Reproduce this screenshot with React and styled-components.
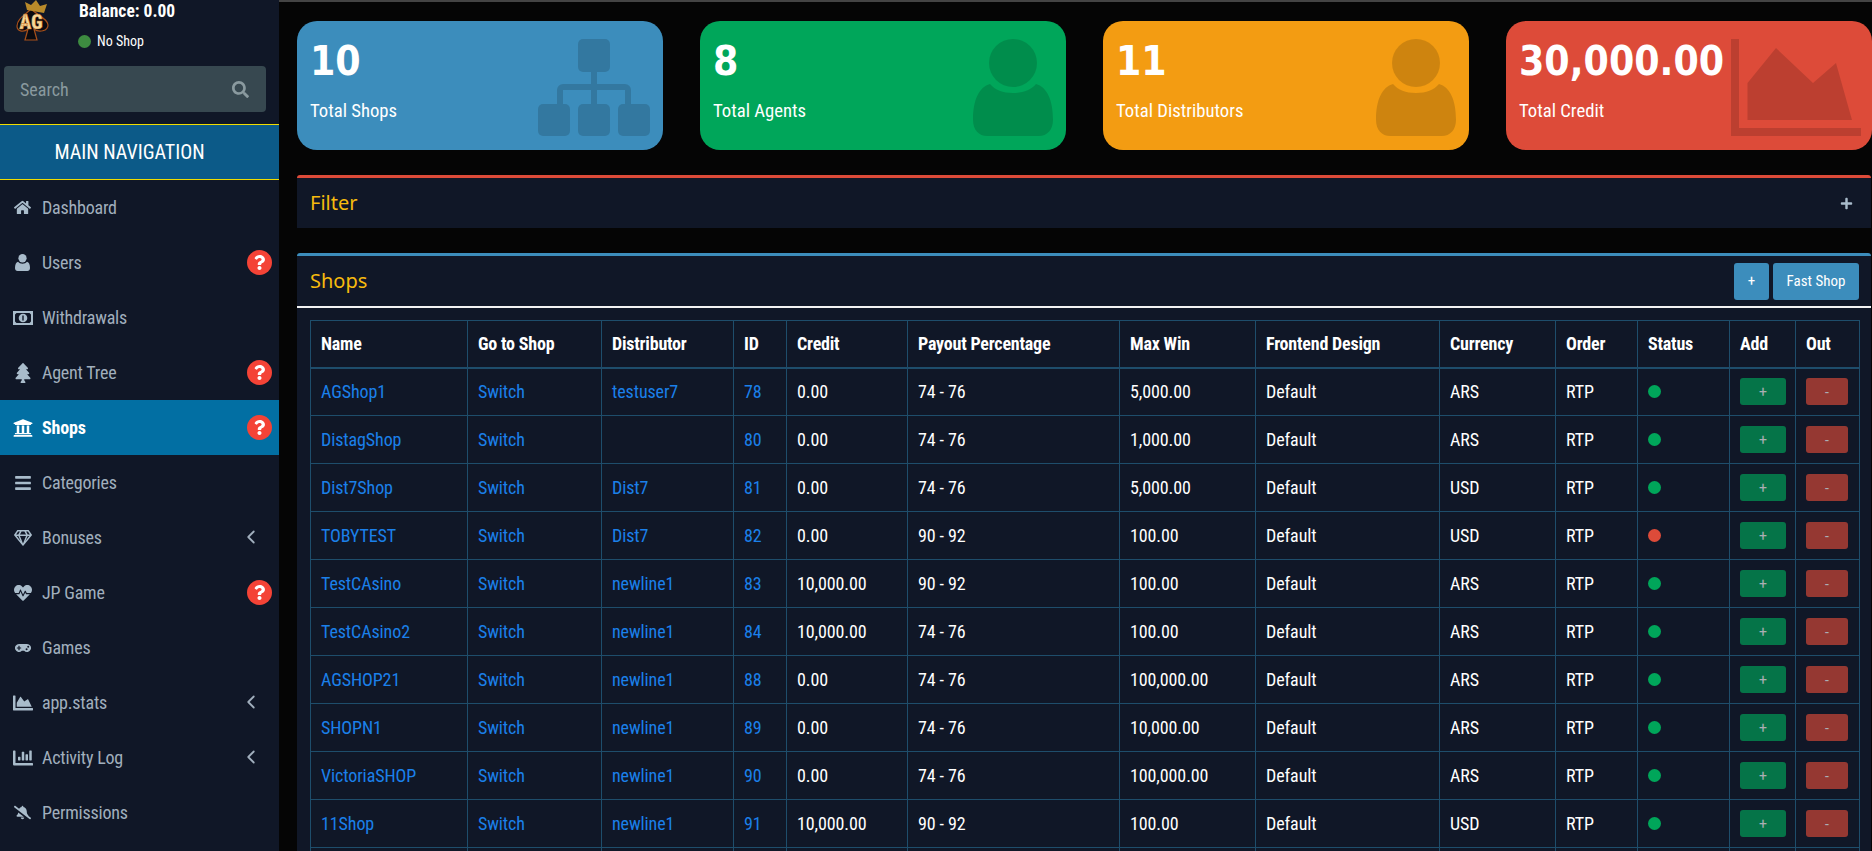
import React from 'react';
import styled, { createGlobalStyle } from 'styled-components';
import {
  FaHome, FaTree, FaUniversity, FaBars, FaRegGem, FaHeartbeat,
  FaGamepad, FaChartArea, FaChartBar, FaBellSlash, FaSearch, FaPlus, FaQuestion,
} from 'react-icons/fa';
import { ChevronLeft } from 'lucide-react';

const GlobalStyle = createGlobalStyle`
  html, body {
    margin: 0;
    height: 851px;
    overflow: hidden;
    background: #050505;
    font-family: Roboto, "Liberation Sans", sans-serif;
    font-stretch: 75%;
  }
  * { box-sizing: border-box; }
`;

const Page = styled.div`
  display: flex;
  width: 1872px;
  height: 851px;
  overflow: hidden;
`;

const Sidebar = styled.aside`
  width: 279px;
  flex: none;
  background: #101727;
`;

const UserPanel = styled.div`
  display: flex;
  height: 66px;
  padding-left: 16px;
`;

const Info = styled.div`
  margin-left: 29px;
  padding-top: 1px;
  color: #fff;
`;

const Balance = styled.div`
  font-size: 17.5px;
  font-weight: 700;
  line-height: 20px;
`;

const ShopState = styled.div`
  display: flex;
  align-items: center;
  gap: 6px;
  margin: 10px 0 0 -1px;
  font-size: 14px;
  line-height: 20px;
`;

const StateDot = styled.span`
  width: 13px;
  height: 13px;
  border-radius: 50%;
  background: #3d8b40;
`;

const SearchBox = styled.div`
  display: flex;
  align-items: center;
  justify-content: space-between;
  width: 262px;
  height: 46px;
  margin: 0 0 12px 4px;
  padding: 0 17px 0 16px;
  border-radius: 4px;
  background: #374850;
  color: #8a9a9f;
  font-size: 18px;
`;

const NavHeader = styled.div`
  height: 56px;
  padding-right: 20px;
  border-top: 1px solid #f0dc00;
  border-bottom: 1px solid #f0dc00;
  background: #0c5a88;
  color: #fff;
  font-size: 20px;
  line-height: 54px;
  text-align: center;
`;

const NavItem = styled.div`
  position: relative;
  display: flex;
  align-items: center;
  height: 55px;
  padding-left: 12px;
  background: ${({ $active }) => ($active ? '#026fa3' : 'transparent')};
  color: ${({ $active }) => ($active ? '#fff' : '#a1afbd')};
  font-size: 18px;
  letter-spacing: -0.2px;
  font-weight: ${({ $active }) => ($active ? 700 : 400)};
`;

const NavIcon = styled.span`
  display: flex;
  align-items: center;
  justify-content: center;
  width: 21px;
  margin-right: 9px;
  color: ${({ $active }) => ($active ? '#fff' : '#a9bccb')};
`;

const HelpBadge = styled.span`
  position: absolute;
  right: 7px;
  top: 15px;
  display: flex;
  align-items: center;
  justify-content: center;
  width: 25px;
  height: 25px;
  border-radius: 50%;
  background: #f44336;
  color: #fff;
  font-size: 15px;
`;

const Chevron = styled(ChevronLeft)`
  position: absolute;
  right: 17px;
  top: 16px;
  width: 22px;
  height: 22px;
`;

const Main = styled.main`
  flex: 1;
  min-width: 0;
  border-top: 2px solid #444;
  padding: 19px 1px 0 18px;
`;

const Cards = styled.div`
  display: grid;
  grid-template-columns: repeat(4, 365.5px);
  column-gap: 37.5px;
  margin-bottom: 25px;
`;

const Card = styled.div`
  position: relative;
  height: 129px;
  padding: 18px 13px;
  border-radius: 20px;
  background: ${({ $bg }) => $bg};
  color: #fff;
  overflow: hidden;
`;

const CardValue = styled.div`
  position: relative;
  font-family: "DejaVu Sans Condensed", "DejaVu Sans", sans-serif;
  font-stretch: condensed;
  font-size: 40.5px;
  font-weight: 700;
  line-height: 44px;
`;

const CardLabel = styled.div`
  margin-top: 17px;
  font-size: 18.7px;
  line-height: 22px;
`;

const CardIcon = styled.svg`
  position: absolute;
  top: 18px;
  right: ${({ $right }) => $right}px;
  height: 97px;
  width: ${({ $w }) => $w}px;
  fill: rgba(0, 0, 0, 0.15);
`;

const Box = styled.section`
  border-top: 3px solid ${({ $accent }) => $accent};
  border-radius: 3px 3px 0 0;
  background: #101727;
  margin-bottom: ${({ $mb }) => $mb || 0}px;
`;

const BoxHeader = styled.div`
  display: flex;
  align-items: center;
  justify-content: space-between;
  height: ${({ $h }) => $h}px;
  padding: 0 ${({ $pr }) => $pr}px 0 13px;
  border-bottom: ${({ $line }) => ($line ? '2px solid #f2f2f2' : 'none')};
`;

const BoxTitle = styled.h3`
  margin: -2px 0 0;
  font-family: "Noto Sans", "Open Sans", sans-serif;
  font-stretch: normal;
  font-size: 20px;
  font-weight: 400;
  color: #f7bb0e;
`;

const Actions = styled.div`
  display: flex;
  gap: 4px;
`;

const HeadButton = styled.button`
  height: 37px;
  width: ${({ $w }) => $w}px;
  padding: 0;
  border: 0;
  border-radius: 3px;
  background: #3c8dbc;
  color: #fff;
  font-family: inherit;
  font-stretch: inherit;
  font-size: 15px;
`;

const TableWrap = styled.div`
  padding: 12px 12px 0 13px;
`;

const Table = styled.table`
  width: 1549px;
  table-layout: fixed;
  border-collapse: collapse;
  color: #fff;
  font-size: 18px;
  letter-spacing: -0.1px;
`;

const Th = styled.th`
  height: 47px;
  padding: 0 0 0 10px;
  border: 1px solid #1e4d6b;
  border-bottom-width: 2px;
  text-align: left;
  font-weight: 700;
  letter-spacing: -0.2px;
`;

const Td = styled.td`
  height: 48px;
  padding: 0 0 0 10px;
  border: 1px solid #1e4d6b;
`;

const Link = styled.span`
  color: #1b80ea;
`;

const Dot = styled.span`
  display: block;
  width: 13px;
  height: 13px;
  border-radius: 50%;
  background: ${({ $on }) => ($on ? '#00a65a' : '#dd4b39')};
`;

const MoneyButton = styled.button`
  display: block;
  width: ${({ $w }) => $w}px;
  height: 27px;
  padding: 0;
  border: 0;
  border-radius: 3px;
  background: ${({ $bg }) => $bg};
  color: #fff;
  font-family: inherit;
  font-stretch: normal;
  font-size: 14px;
  opacity: 0.65;
`;

const columns = [157, 134, 132, 53, 121, 212, 136, 184, 116, 82, 92, 66, 64];
const headers = ['Name', 'Go to Shop', 'Distributor', 'ID', 'Credit', 'Payout Percentage', 'Max Win', 'Frontend Design', 'Currency', 'Order', 'Status', 'Add', 'Out'];

const shops = [
  ['AGShop1', 'testuser7', 78, '0.00', '74 - 76', '5,000.00', 'ARS', true],
  ['DistagShop', '', 80, '0.00', '74 - 76', '1,000.00', 'ARS', true],
  ['Dist7Shop', 'Dist7', 81, '0.00', '74 - 76', '5,000.00', 'USD', true],
  ['TOBYTEST', 'Dist7', 82, '0.00', '90 - 92', '100.00', 'USD', false],
  ['TestCAsino', 'newline1', 83, '10,000.00', '90 - 92', '100.00', 'ARS', true],
  ['TestCAsino2', 'newline1', 84, '10,000.00', '74 - 76', '100.00', 'ARS', true],
  ['AGSHOP21', 'newline1', 88, '0.00', '74 - 76', '100,000.00', 'ARS', true],
  ['SHOPN1', 'newline1', 89, '0.00', '74 - 76', '10,000.00', 'ARS', true],
  ['VictoriaSHOP', 'newline1', 90, '0.00', '74 - 76', '100,000.00', 'ARS', true],
  ['11Shop', 'newline1', 91, '10,000.00', '90 - 92', '100.00', 'USD', true],
];

// FA4 style user, the package one is too wide
const UserGlyph = () => (
  <svg width="15" height="17" viewBox="0 0 15 17" fill="currentColor">
    <ellipse cx="7.5" cy="4.2" rx="4.1" ry="4.2" />
    <path d="M3 7.8c1 1.2 2.6 1.9 4.5 1.9s3.500-.7 4.500-1.900c2 .6 3 2.900 3 6.200 0 1.800-1.100 3-2.600 3H2.600C1.100 17 0 15.800 0 14c0-3.300 1-5.600 3-6.200z" />
  </svg>
);

const MoneyGlyph = () => (
  <svg width="20" height="14" viewBox="0 0 20 14">
    <path fill="currentColor" fillRule="evenodd" d="M0 0h20v14H0zM3.500 2L2 3.500v7L3.500 12h13l1.500-1.500v-7L16.500 2z" />
    <circle cx="10" cy="7" r="4.300" fill="currentColor" />
    <path fill="#101727" d="M9.300 4.500h1.400v5H9.300z" />
  </svg>
);

const nav = [
  { label: 'Dashboard', icon: FaHome, size: 17 },
  { label: 'Users', icon: UserGlyph, help: true },
  { label: 'Withdrawals', icon: MoneyGlyph },
  { label: 'Agent Tree', icon: FaTree, size: 20, help: true },
  { label: 'Shops', icon: FaUniversity, size: 20, help: true, active: true },
  { label: 'Categories', icon: FaBars, size: 18 },
  { label: 'Bonuses', icon: FaRegGem, size: 18, sub: true },
  { label: 'JP Game', icon: FaHeartbeat, size: 18, help: true },
  { label: 'Games', icon: FaGamepad, size: 16 },
  { label: 'app.stats', icon: FaChartArea, size: 20, sub: true },
  { label: 'Activity Log', icon: FaChartBar, size: 20, sub: true },
  { label: 'Permissions', icon: FaBellSlash, size: 17 },
];

const Logo = () => (
  <svg width="34" height="42" viewBox="0 0 34 42">
    <path d="M15 9C9 15 1 19 1 26c0 5 6 7 11 3l-3 11h12l-3-11c5 4 14 2 14-4 0-6-11-10-17-16z" fill="#0a0a10" stroke="#a8501a" strokeWidth="1.200" />
    <path d="M11 10L9 2l6 3 5-5 4 6 7-2-3 9z" fill="#b98a2a" />
    <text x="15" y="29" textAnchor="middle" fontFamily="Roboto" fontSize="20" fontWeight="900" fill="#f4d79a" stroke="#c9701e" strokeWidth="0.400">AG</text>
  </svg>
);

const SitemapIcon = () => (
  <CardIcon $right={13} $w={112} viewBox="0 0 112 97" preserveAspectRatio="none">
    <rect x="40" y="0" width="32" height="33" rx="5" />
    <rect x="0" y="65" width="32" height="32" rx="5" />
    <rect x="40" y="65" width="32" height="32" rx="5" />
    <rect x="80" y="65" width="32" height="32" rx="5" />
    <path d="M53 33h6v12h28a6 6 0 0 1 6 6v14h-6V51H59v14h-6V51H25v14h-6V51a6 6 0 0 1 6-6h28z" />
  </CardIcon>
);

const PersonIcon = () => (
  <CardIcon $right={13} $w={80} viewBox="0 0 80 97" preserveAspectRatio="none">
    <ellipse cx="40" cy="24" rx="24" ry="24" />
    <path d="M17 45c5 6 13 9 23 9s18-3 23-9c11 3 17 16 17 36 0 10-6 16-14 16H14C6 97 0 91 0 81c0-20 6-33 17-36z" />
  </CardIcon>
);

const AreaIcon = () => (
  <CardIcon $right={11} $w={130} viewBox="0 0 130 97" preserveAspectRatio="none">
    <path d="M0 0h8v89h122v8H0z" />
    <path d="M16.500 44L45 9l37 35 23-20 16 57H16.500z" />
  </CardIcon>
);

const cards = [
  { value: '10', label: 'Total Shops', bg: '#3c8dbc', icon: <SitemapIcon /> },
  { value: '8', label: 'Total Agents', bg: '#00a65a', icon: <PersonIcon /> },
  { value: '11', label: 'Total Distributors', bg: '#f39c12', icon: <PersonIcon /> },
  { value: '30,000.00', label: 'Total Credit', bg: '#dd4b39', icon: <AreaIcon /> },
];

const ShopRow = ({ shop }) => {
  const [name, distributor, id, credit, payout, maxWin, currency, on] = shop;
  return (
    <tr>
      <Td><Link>{name}</Link></Td>
      <Td><Link>Switch</Link></Td>
      <Td><Link>{distributor}</Link></Td>
      <Td><Link>{id}</Link></Td>
      <Td>{credit}</Td>
      <Td>{payout}</Td>
      <Td>{maxWin}</Td>
      <Td>Default</Td>
      <Td>{currency}</Td>
      <Td>RTP</Td>
      <Td><Dot $on={on} /></Td>
      <Td><MoneyButton disabled $w={46} $bg="#00a65a">+</MoneyButton></Td>
      <Td><MoneyButton disabled $w={42} $bg="#dd4b39">-</MoneyButton></Td>
    </tr>
  );
};

export default function App() {
  return (
    <Page>
      <GlobalStyle />
      <Sidebar>
        <UserPanel>
          <Logo />
          <Info>
            <Balance>Balance: 0.00</Balance>
            <ShopState><StateDot />No Shop</ShopState>
          </Info>
        </UserPanel>
        <SearchBox>Search<FaSearch size={17} /></SearchBox>
        <NavHeader>MAIN NAVIGATION</NavHeader>
        {nav.map(({ label, icon: Icon, size, help, sub, active }) => (
          <NavItem key={label} $active={active}>
            <NavIcon $active={active}><Icon size={size} /></NavIcon>
            {label}
            {help && <HelpBadge><FaQuestion /></HelpBadge>}
            {sub && <Chevron />}
          </NavItem>
        ))}
      </Sidebar>
      <Main>
        <Cards>
          {cards.map((c) => (
            <Card key={c.label} $bg={c.bg}>
              {c.icon}
              <CardValue>{c.value}</CardValue>
              <CardLabel>{c.label}</CardLabel>
            </Card>
          ))}
        </Cards>
        <Box $accent="#dd4b39" $mb={25}>
          <BoxHeader $h={50} $pr={18}>
            <BoxTitle>Filter</BoxTitle>
            <FaPlus color="#a9bccb" size={13} />
          </BoxHeader>
        </Box>
        <Box $accent="#3c8dbc">
          <BoxHeader $h={52} $pr={12} $line>
            <BoxTitle>Shops</BoxTitle>
            <Actions>
              <HeadButton $w={35}>+</HeadButton>
              <HeadButton $w={86}>Fast Shop</HeadButton>
            </Actions>
          </BoxHeader>
          <TableWrap>
            <Table>
              <colgroup>
                {columns.map((w, i) => <col key={i} width={w} />)}
              </colgroup>
              <thead>
                <tr>{headers.map((h) => <Th key={h}>{h}</Th>)}</tr>
              </thead>
              <tbody>
                {shops.map((s) => <ShopRow key={s[2]} shop={s} />)}
                <tr>{columns.map((w, i) => <Td key={i} />)}</tr>
              </tbody>
            </Table>
          </TableWrap>
        </Box>
      </Main>
    </Page>
  );
}
